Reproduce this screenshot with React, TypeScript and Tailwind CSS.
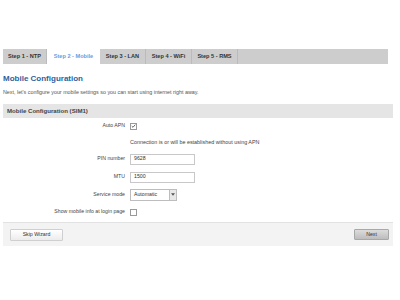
import React from "react";

const tabs = [
  { t: "Step 1 - NTP", w: "w-[44px]" },
  { t: "Step 2 - Mobile", w: "w-[53px]" },
  { t: "Step 3 - LAN", w: "w-[46px]" },
  { t: "Step 4 - WiFi", w: "w-[46px]" },
  { t: "Step 5 - RMS", w: "w-[46px]" },
];

function Check({ checked }: { checked?: boolean }) {
  return (
    <span className="inline-flex h-[7px] w-[7px] items-center justify-center border border-[#9a9a9a] bg-white">
      {checked && (
        <svg viewBox="0 0 10 10" className="h-[6px] w-[6px]">
          <path d="M1.5 5.2 L4 7.6 L8.6 2.2" fill="none" stroke="#444" strokeWidth="1.6" />
        </svg>
      )}
    </span>
  );
}

function Row({ label, h, children }: { label?: string; h: string; children: React.ReactNode }) {
  return (
    <div className={`flex items-center ${h}`}>
      <div className="w-[124px] shrink-0 pr-[2px] text-right text-[5.2px] text-[#444]">{label}</div>
      <div className="flex items-center pl-[3px]">{children}</div>
    </div>
  );
}

export default function App() {
  return (
    <div className="relative h-[300px] w-[400px] overflow-hidden bg-white font-['Liberation_Sans',Arial,sans-serif]">
      {/* Wizard steps */}
      <div className="ml-[3px] mt-[49px] flex h-[15px] w-[385px] bg-[#cdcdcd]">
        {tabs.map(({ t, w }, i) => (
          <div
            key={t}
            className={
              i === 1
                ? `flex ${w} items-center justify-center bg-white text-[5.6px] font-bold text-[#5f9fe2]`
                : `flex ${w} items-center justify-center border-r border-[#bbbbbb] text-[5.6px] font-bold text-[#333]`
            }
          >
            {t}
          </div>
        ))}
      </div>

      <div className="ml-[3px] mt-[10px] text-[8px] font-bold leading-[10px] text-[#2d5f9e]">Mobile Configuration</div>
      <div className="ml-[3px] mt-[5px] text-[5.35px] leading-[7px] text-[#555]">
        Next, let's configure your mobile settings so you can start using internet right away.
      </div>

      {/* Section */}
      <div className="mx-[3px] mt-[8px] flex h-[14px] w-[390px] items-center bg-[#e5e5e5] pl-[4px] text-[6.1px] font-bold text-[#444]">
        Mobile Configuration (SIM1)
      </div>

      <div className="ml-[3px] flex flex-col">
        <Row label="Auto APN" h="h-[16px]">
          <Check checked />
        </Row>
        <Row h="h-[16px]">
          <span className="text-[5.4px] text-[#444]">Connection is or will be established without using APN</span>
        </Row>
        <Row label="PIN number" h="h-[18px]">
          <div className="flex h-[11px] w-[65px] items-center border border-[#c8c8c8] bg-white px-[3px] text-[5.2px] text-[#333]">9628</div>
        </Row>
        <Row label="MTU" h="h-[18px]">
          <div className="flex h-[11px] w-[65px] items-center border border-[#c8c8c8] bg-white px-[3px] text-[5.2px] text-[#333]">1500</div>
        </Row>
        <Row label="Service mode" h="h-[17px]">
          <div className="flex h-[12px] w-[47px] items-center border border-[#bdbdbd] bg-white text-[5.2px] text-[#333]">
            <span className="flex-1 pl-[3px]">Automatic</span>
            <span className="flex h-full w-[7px] items-center justify-center border-l border-[#bdbdbd] bg-[#e8e8e8]">
              <svg viewBox="0 0 6 4" className="h-[3px] w-[4px]">
                <path d="M0 0 L6 0 L3 4 Z" fill="#555" />
              </svg>
            </span>
          </div>
        </Row>
        <Row label="Show mobile info at login page" h="h-[18px]">
          <Check />
        </Row>
      </div>

      {/* Footer */}
      <div className="mx-[3px] mt-[1px] flex h-[24px] w-[390px] items-center justify-between border-t border-[#e2e2e2] bg-[#f3f3f3] pl-[7px] pr-[4px]">
        <div className="flex h-[12px] w-[53px] items-center justify-center rounded-[1px] border border-[#cfcfcf] bg-gradient-to-b from-white to-[#ececec] text-[5.2px] text-[#333]">
          Skip Wizard
        </div>
        <div className="flex h-[11px] w-[35px] items-center justify-center rounded-[1px] border border-[#a8a8a8] bg-gradient-to-b from-[#dcdcdc] to-[#bdbdbd] text-[5.2px] text-[#333]">
          Next
        </div>
      </div>
    </div>
  );
}
